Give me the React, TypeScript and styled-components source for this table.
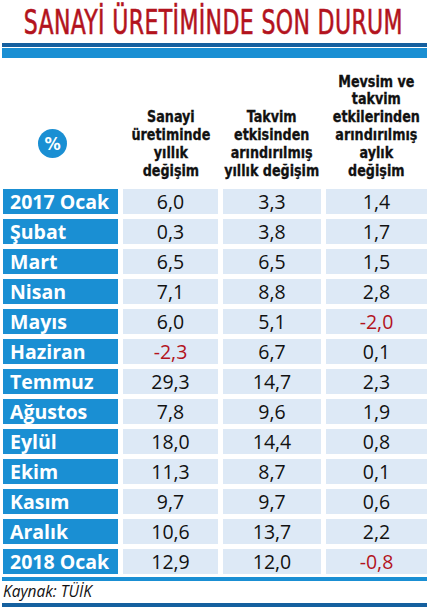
import React from 'react';
import styled, {createGlobalStyle} from 'styled-components';

const GlobalStyle = createGlobalStyle`
  html, body {
    margin: 0;
    padding: 0;
    background: #ffffff;
  }
  body {
    font-family: 'Open Sans', 'Noto Sans', sans-serif;
  }
`;

const BLUE = '#1a8fd3';
const DARK_BLUE = '#15609f';
const CELL = '#dde9f6';
const RED = '#b3131d';

const rows: [string, string, string, string][] = [
  ['2017 Ocak', '6,0', '3,3', '1,4'],
  ['Şubat', '0,3', '3,8', '1,7'],
  ['Mart', '6,5', '6,5', '1,5'],
  ['Nisan', '7,1', '8,8', '2,8'],
  ['Mayıs', '6,0', '5,1', '-2,0'],
  ['Haziran', '-2,3', '6,7', '0,1'],
  ['Temmuz', '29,3', '14,7', '2,3'],
  ['Ağustos', '7,8', '9,6', '1,9'],
  ['Eylül', '18,0', '14,4', '0,8'],
  ['Ekim', '11,3', '8,7', '0,1'],
  ['Kasım', '9,7', '9,7', '0,6'],
  ['Aralık', '10,6', '13,7', '2,2'],
  ['2018 Ocak', '12,9', '12,0', '-0,8'],
];

const headers = [
  ['Sanayi', 'üretiminde', 'yıllık', 'değişim'],
  ['Takvim', 'etkisinden', 'arındırılmış', 'yıllık değişim'],
  ['Mevsim ve', 'takvim', 'etkilerinden', 'arındırılmış', 'aylık', 'değişim'],
];

const Page = styled.div`
  width: 427px;
  height: 607px;
  overflow: hidden;
  display: flex;
  flex-direction: column;
`;

const TitleBar = styled.div`
  height: 42px;
  display: flex;
  justify-content: center;
  align-items: flex-end;
  overflow: hidden;
`;

const Title = styled.h1`
  margin: 0;
  font-family: 'DejaVu Sans Condensed', 'DejaVu Sans', sans-serif;
  font-weight: 500;
  font-size: 34px;
  line-height: 40px;
  color: ${RED};
  white-space: nowrap;
  transform: scaleX(0.72);
  letter-spacing: 0.5px;
  -webkit-text-stroke: 0.6px ${RED};
`;

const Rule = styled.div<{$color: string; $h: number; $mt?: number}>`
  flex: none;
  margin-left: 2px;
  margin-top: ${p => p.$mt ?? 0}px;
  height: ${p => p.$h}px;
  background: ${p => p.$color};
`;

const Grid = styled.div`
  display: grid;
  grid-template-columns: 115px 95px 98px 101px;
  grid-template-rows: 126px;
  grid-auto-rows: 25px;
  column-gap: 5px;
  row-gap: 5px;
  padding-left: 3px;
`;

const Row = styled.div`
  display: contents;
`;

const HeadCell = styled.div`
  display: flex;
  flex-direction: column;
  justify-content: flex-end;
  align-items: center;
  padding-bottom: 3px;
`;

const HeadText = styled.div`
  display: flex;
  flex-direction: column;
  align-items: center;
  text-align: center;
  font-family: 'DejaVu Sans Condensed', 'DejaVu Sans', sans-serif;
  font-weight: 700;
  font-size: 15.4px;
  line-height: 17.9px;
  color: #111;
  white-space: nowrap;
  transform: scaleX(0.92);
  -webkit-text-stroke: 0.3px #111;
`;

const PctCell = styled.div`
  display: flex;
  align-items: center;
  justify-content: center;
  padding-top: 44px;
  padding-right: 16px;
`;

const PctBadge = styled.div`
  width: 29px;
  height: 29px;
  border-radius: 50%;
  background: ${BLUE};
  color: #fff;
  font-family: 'DejaVu Sans Condensed', 'DejaVu Sans', sans-serif;
  font-weight: 700;
  font-size: 18px;
  display: flex;
  align-items: center;
  justify-content: center;
`;

const Label = styled.div`
  background: ${BLUE};
  color: #fff;
  font-family: 'Open Sans', 'Noto Sans', sans-serif;
  font-weight: 700;
  font-size: 19.5px;
  line-height: 25px;
  padding-left: 7px;
  white-space: nowrap;
`;

const Value = styled.div<{$neg?: boolean}>`
  background: ${CELL};
  color: ${p => (p.$neg ? RED : '#111')};
  font-family: 'Open Sans', 'Noto Sans', sans-serif;
  font-size: 19.5px;
  line-height: 25px;
  text-align: center;
`;

const Source = styled.div`
  flex: none;
  margin-left: 3px;
  height: 20px;
  font-family: 'Open Sans', 'Noto Sans', sans-serif;
  font-style: italic;
  font-size: 15.5px;
  line-height: 21px;
  color: #111;
`;

export default function App() {
  return (
    <Page>
      <GlobalStyle />
      <TitleBar>
        <Title>SANAYİ ÜRETİMİNDE SON DURUM</Title>
      </TitleBar>
      <Rule $color={DARK_BLUE} $h={4} $mt={1} />
      <Rule $color={BLUE} $h={10} $mt={1} />
      <Grid>
        <Row>
          <PctCell>
            <PctBadge>%</PctBadge>
          </PctCell>
          {headers.map((h, i) => (
            <HeadCell key={i}>
              <HeadText>
                {h.map(line => (
                  <span key={line}>{line}</span>
                ))}
              </HeadText>
            </HeadCell>
          ))}
        </Row>
        {rows.map(r => (
          <Row key={r[0]}>
            <Label>{r[0]}</Label>
            {r.slice(1).map((v, i) => (
              <Value key={i} $neg={v.startsWith('-')}>
                {v}
              </Value>
            ))}
          </Row>
        ))}
      </Grid>
      <Rule $color={BLUE} $h={4} $mt={3} />
      <Source>Kaynak: TÜİK</Source>
      <Rule $color={DARK_BLUE} $h={4} $mt={2} />
    </Page>
  );
}
